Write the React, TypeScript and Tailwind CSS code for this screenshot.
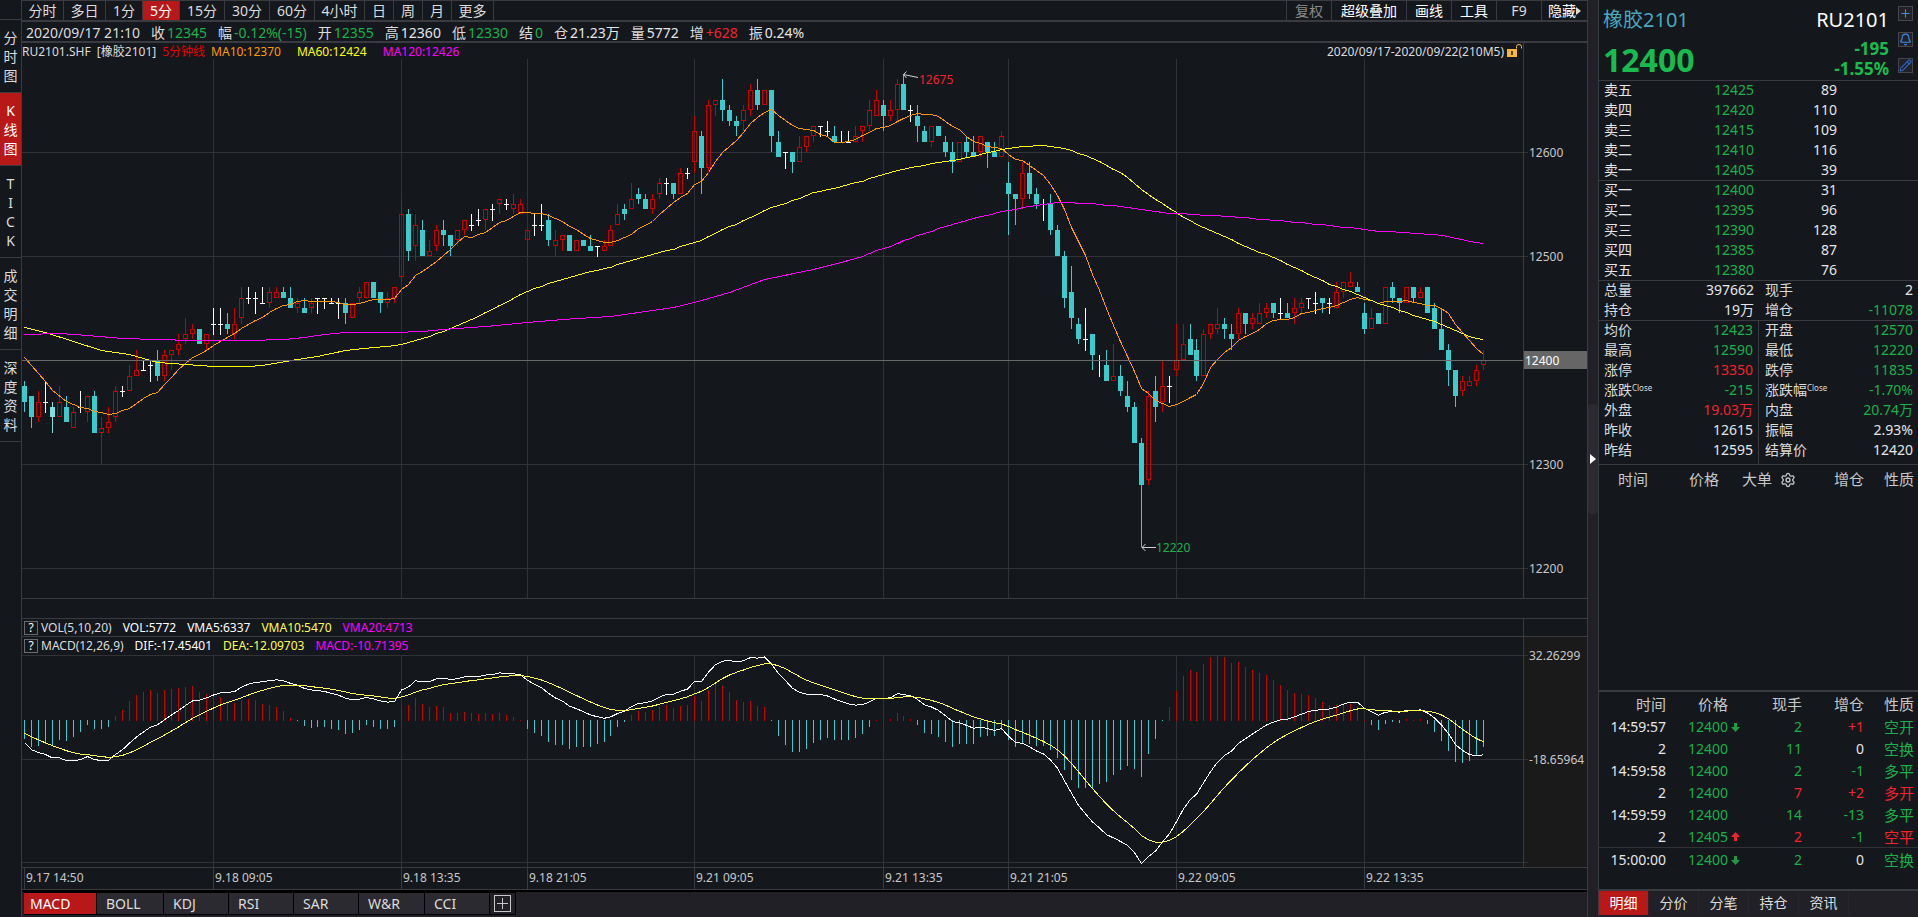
import React, { useState } from "react";
import { Bell, Pencil, Plus, Settings } from "lucide-react";

const UP = "#c80000";
const DOWN = "#3acccc";
const GRID = "#303236";

// open, high, low, close in ticks of 5 around 12400
const CANDLES: number[][] = [
  [-5, -4, -10, -8], [-7, -7, -13, -11], [-11, -6, -12, -8], [-8, -4, -10, -8], [-9, -8, -14, -11], [-11, -5, -11, -8],
  [-9, -7, -12, -12], [-13, -9, -13, -10], [-9, -6, -10, -9], [-10, -7, -12, -7], [-7, -6, -14, -14], [-14, -11, -20, -13],
  [-13, -9, -14, -12], [-11, -5, -12, -6], [-6, -5, -7, -6], [-6, -1, -6, -3], [-3, 2, -3, -2], [-2, 0, -2, -2],
  [-1, 0, -4, -1], [0, 2, -4, -3], [-3, 2, -4, 1], [1, 2, -2, 2], [2, 5, 1, 3], [4, 8, 3, 5],
  [5, 7, 4, 6], [6, 6, 3, 3], [3, 5, 2, 5], [7, 10, 5, 7], [7, 10, 5, 7], [7, 9, 5, 6],
  [5, 10, 4, 7], [8, 14, 7, 12], [12, 14, 11, 12], [12, 13, 9, 12], [11, 14, 11, 11], [11, 14, 10, 13],
  [12, 14, 12, 13], [13, 14, 12, 12], [12, 14, 10, 10], [10, 12, 9, 11], [10, 12, 9, 9], [10, 12, 9, 11],
  [12, 12, 9, 12], [12, 12, 10, 12], [11, 12, 11, 11], [11, 12, 8, 11], [11, 12, 7, 9], [8, 11, 8, 11],
  [12, 14, 11, 13], [12, 15, 12, 15], [15, 15, 12, 12], [13, 13, 9, 11], [11, 13, 10, 12], [12, 14, 11, 14],
  [16, 31, 15, 28], [28, 29, 19, 21], [22, 28, 19, 26], [25, 27, 20, 20], [20, 23, 20, 21], [22, 26, 21, 25],
  [25, 27, 22, 24], [24, 24, 20, 22], [23, 25, 22, 25], [25, 27, 24, 27], [26, 28, 25, 26], [27, 29, 26, 27],
  [27, 29, 25, 29], [29, 30, 27, 29], [30, 31, 28, 31], [30, 31, 29, 30], [29, 32, 28, 30], [28, 31, 28, 30],
  [23, 25, 20, 25], [26, 28, 24, 26], [26, 30, 25, 26], [27, 28, 22, 23], [22, 25, 20, 23], [23, 24, 21, 24],
  [24, 24, 21, 21], [21, 23, 21, 23], [23, 23, 22, 22], [22, 24, 21, 21], [22, 22, 20, 22], [21, 23, 21, 22],
  [22, 26, 22, 25], [26, 30, 26, 28], [29, 30, 27, 28], [29, 34, 29, 31], [32, 33, 30, 31], [31, 32, 29, 29],
  [29, 32, 28, 31], [32, 35, 31, 34], [34, 35, 32, 34], [34, 34, 31, 32], [32, 37, 32, 36], [36, 37, 35, 36],
  [38, 47, 36, 44], [43, 44, 32, 37], [37, 50, 36, 49], [49, 50, 47, 50], [50, 54, 46, 48], [48, 49, 45, 46],
  [46, 47, 43, 45], [46, 49, 44, 48], [48, 53, 47, 52], [52, 54, 48, 49], [49, 52, 49, 52], [52, 52, 40, 43],
  [42, 44, 39, 39], [40, 40, 37, 40], [40, 40, 36, 38], [38, 43, 38, 41], [41, 43, 40, 43], [43, 45, 42, 45],
  [45, 45, 43, 45], [44, 46, 43, 44], [43, 45, 42, 42], [42, 44, 42, 42], [42, 44, 42, 42], [42, 45, 42, 43],
  [44, 45, 42, 45], [45, 50, 44, 48], [47, 52, 47, 50], [49, 50, 44, 47], [47, 50, 46, 48], [48, 54, 46, 53],
  [53, 55, 48, 48], [48, 49, 46, 48], [47, 49, 42, 45], [44, 45, 42, 42], [42, 45, 41, 45], [45, 45, 43, 43],
  [42, 43, 39, 40], [40, 42, 36, 38], [38, 42, 38, 42], [42, 43, 39, 40], [40, 43, 39, 39], [40, 43, 39, 43],
  [42, 42, 37, 40], [40, 42, 39, 39], [39, 44, 39, 43], [34, 38, 24, 32], [32, 32, 26, 31], [31, 38, 29, 36],
  [36, 38, 31, 32], [32, 33, 29, 30], [30, 31, 27, 30], [30, 32, 24, 25], [25, 26, 20, 20], [20, 21, 10, 12],
  [13, 18, 6, 8], [7, 8, 3, 4], [4, 10, 2, 4], [5, 5, -2, 1], [0, 1, -3, 0], [-1, 2, -4, -4],
  [-4, 3, -4, -3], [-3, -1, -7, -6], [-7, -4, -10, -9], [-9, -8, -16, -16], [-16, -15, -36, -24], [-23, -6, -24, -7],
  [-6, -3, -12, -9], [-8, 0, -10, -5], [-5, -3, -8, -5], [-2, 7, -3, 0], [0, 7, 0, 3], [4, 7, 1, 1],
  [2, 4, -4, -3], [-3, 6, -3, 5], [5, 7, 4, 7], [6, 10, 5, 7], [7, 8, 4, 6], [5, 7, 2, 4],
  [5, 10, 4, 9], [9, 9, 5, 7], [7, 9, 6, 8], [7, 11, 7, 9], [9, 11, 8, 10], [11, 11, 8, 9],
  [9, 12, 8, 9], [9, 11, 8, 8], [9, 12, 7, 10], [10, 12, 9, 11], [12, 12, 10, 12], [11, 13, 9, 11],
  [12, 12, 9, 11], [11, 12, 9, 11], [10, 15, 10, 13], [13, 15, 12, 15], [14, 17, 14, 15], [14, 15, 13, 13],
  [9, 11, 5, 6], [6, 10, 6, 8], [9, 9, 7, 7], [7, 14, 7, 14], [14, 15, 11, 12], [12, 12, 9, 11],
  [11, 14, 11, 14], [14, 14, 11, 12], [12, 14, 12, 13], [14, 14, 9, 9], [10, 11, 6, 6], [6, 10, 2, 2],
  [2, 3, -5, -2], [-2, -2, -9, -7], [-6, -3, -7, -4], [-5, -3, -5, -4], [-4, -1, -5, -2], [-1, 2, -2, 0],
];

const CLOSES = CANDLES.map(c => c[3]);

// values before the first full window come from earlier sessions
const MA10_LEAD = [[0, 0.6], [3, -4], [4, -5.8], [6, -7.8], [8, -9]];
const MA60_LEAD = [
  [0, 6.3], [3, 5.3], [11, 2], [15, 1.2], [19, -0.4], [25, -1], [27, -1.15], [32, -1.15], [34, -0.9], [39, 0.1],
  [42, 0.7], [46, 1.9], [50, 2.5], [52, 2.6], [54, 3.1], [57, 4.2], [58, 4.7],
];
const MA120_LEAD = [
  [0, 5], [5, 5.2], [9, 4.9], [14, 4.2], [24, 3.9], [32, 3.9], [37, 4.1], [40, 4.4], [43, 5], [46, 5.3], [53, 5.3],
  [57, 5.6], [60, 6], [66, 6.6], [72, 7.4], [77, 7.8], [84, 8.5], [88, 9.3], [93, 10.2], [96, 11.1], [101, 13.1],
  [106, 15.6], [113, 17.5], [118, 19.3],
];

const SESSIONS = [
  { index: 0, label: "9.17 14:50" },
  { index: 27, label: "9.18 09:05" },
  { index: 54, label: "9.18 13:35" },
  { index: 72, label: "9.18 21:05" },
  { index: 96, label: "9.21 09:05" },
  { index: 123, label: "9.21 13:35" },
  { index: 141, label: "9.21 21:05" },
  { index: 165, label: "9.22 09:05" },
  { index: 192, label: "9.22 13:35" },
];

const AXIS_X = 1501;
const barX = (i: number) => 2 + 7 * i - Math.floor(i / 42);
const priceY = (tick: number) => Math.round(301 - tick * 5.2);
const macdY = (v: number) => (32.263 - v) / 0.4896;

const movingAverage = (size: number, lead: number[][]) => {
  const points = lead.map(([i, v]) => `${barX(i) + 0.5},${priceY(v) + 0.5}`);
  for (let i = size - 1; i < CLOSES.length; i++) {
    const sum = CLOSES.slice(i - size + 1, i + 1).reduce((a, b) => a + b, 0);
    points.push(`${barX(i) + 0.5},${priceY(sum / size) + 0.5}`);
  }
  return points.join(" ");
};

const macdSeries = () => {
  let fast = -1.35;
  let slow = 9;
  let dea = -5.9;
  return CLOSES.map((tick, i) => {
    if (i > 0) {
      fast += ((tick * 5 - fast) * 2) / 13;
      slow += ((tick * 5 - slow) * 2) / 27;
      dea += ((fast - slow - dea) * 2) / 10;
    }
    return { dif: fast - slow, dea, bar: 2 * (fast - slow - dea) };
  });
};

const Candle = ({ index, data }: { index: number; data: number[] }) => {
  const [o, h, l, c] = data;
  const x = barX(index);
  const top = priceY(Math.max(o, c));
  const bottom = priceY(Math.min(o, c));
  const high = priceY(h);
  const low = priceY(l);

  if (o === c) {
    return (
      <g fill="#ffffff">
        <rect x={x} y={high} width={1} height={low - high + 1} />
        <rect x={x - 2} y={top} width={5} height={1} />
      </g>
    );
  }
  if (c < o) {
    return (
      <g fill={index === 4 ? "#7fdede" : DOWN}>
        <rect x={x} y={high} width={1} height={low - high} />
        <rect x={x - 2} y={top} width={5} height={bottom - top} />
      </g>
    );
  }
  return (
    <g fill={UP}>
      <rect x={x} y={high} width={1} height={top - high} />
      <rect x={x} y={bottom} width={1} height={low - bottom} />
      <path
        fillRule="evenodd"
        d={`M${x - 2} ${top}h5v${bottom - top}h-5zM${x - 1} ${top + 1}h3v${bottom - top - 2}h-3z`}
      />
    </g>
  );
};

const PriceChart = () => (
  <svg className="block h-full w-full" viewBox="0 0 1565 539" preserveAspectRatio="none" shapeRendering="crispEdges">
    <g fill={GRID}>
      {SESSIONS.slice(1).map(s => (
        <rect key={s.index} x={barX(s.index)} y={0} width={1} height={539} />
      ))}
      {[40, 20, -20, -40].map(tick => (
        <rect key={tick} x={0} y={priceY(tick)} width={AXIS_X + 5} height={1} />
      ))}
      <rect x={AXIS_X} y={0} width={1} height={539} fill="#3a3b40" />
    </g>
    {CANDLES.map((data, i) => (
      <Candle key={i} index={i} data={data} />
    ))}
    <g fill="none" strokeWidth={1}>
      <polyline stroke="#ff9900" points={movingAverage(10, MA10_LEAD)} />
      <polyline stroke="#ffff00" points={movingAverage(60, MA60_LEAD)} />
      <polyline stroke="#ff00ff" points={movingAverage(120, MA120_LEAD)} />
    </g>
    <rect x={0} y={301} width={AXIS_X} height={1} fill="#6a6a6a" />
    <g fill="none" stroke="#d0d0d0" shapeRendering="auto">
      <path d="M896 18.5L881.5 15.5M884.5 12.5L881.5 15.5L884.5 19" />
      <path d="M1134 488.5H1120M1123.5 485L1120 488.5L1123.5 492" />
    </g>
    <g className="text-xs">
      <text x={897} y={25} fill="#f5222d">12675</text>
      <text x={1134} y={493} fill="#18b14b">12220</text>
      <g fill="#c8c8c8">
        <text x={1507} y={98}>12600</text>
        <text x={1507} y={202}>12500</text>
        <text x={1507} y={410}>12300</text>
        <text x={1507} y={514}>12200</text>
      </g>
      <rect x={AXIS_X + 1} y={292} width={63} height={18} fill="#666666" />
      <text x={1503} y={306} fill="#ffffff">12400</text>
    </g>
  </svg>
);

const MacdChart = () => {
  const series = macdSeries();
  const zero = Math.round(macdY(0));
  return (
    <svg
      className="block h-[212px] w-full shrink-0 overflow-visible"
      viewBox="0 0 1565 212"
      preserveAspectRatio="none"
      shapeRendering="crispEdges"
    >
      <rect x={AXIS_X + 1} y={0} width={63} height={212} fill="#1a1a1b" />
      <g fill={GRID}>
        {SESSIONS.slice(1).map(s => (
          <rect key={s.index} x={barX(s.index)} y={0} width={1} height={212} />
        ))}
        {[0, 104, 207].map(y => (
          <rect key={y} x={0} y={y} width={AXIS_X + 5} height={1} />
        ))}
        <rect x={AXIS_X} y={0} width={1} height={212} fill="#3a3b40" />
      </g>
      {series.map((s, i) => {
        const y = Math.round(macdY(s.bar));
        return s.bar > 0 ? (
          <rect key={i} x={barX(i)} y={y} width={1} height={Math.max(zero - y, 1)} fill={UP} />
        ) : (
          <rect key={i} x={barX(i)} y={zero - 1} width={1} height={Math.max(y - zero + 1, 1)} fill={DOWN} />
        );
      })}
      <g fill="none" strokeWidth={1}>
        <polyline stroke="#ffffff" points={series.map((s, i) => `${barX(i) + 0.5},${macdY(s.dif) + 0.5}`).join(" ")} />
        <polyline stroke="#ffff50" points={series.map((s, i) => `${barX(i) + 0.5},${macdY(s.dea) + 0.5}`).join(" ")} />
      </g>
      <g className="text-xs" fill="#c8c8c8">
        <text x={1507} y={5}>32.26299</text>
        <text x={1507} y={109}>-18.65964</text>
      </g>
    </svg>
  );
};

const TimeAxis = () => (
  <svg className="block h-[21px] w-full" viewBox="0 0 1565 21" preserveAspectRatio="none" shapeRendering="crispEdges">
    {SESSIONS.map(s => (
      <g key={s.index}>
        <rect x={barX(s.index)} y={0} width={1} height={21} fill="#3a3b40" />
        <text x={barX(s.index) + 2} y={14} className="text-xs" fill="#c8c8c8">
          {s.label}
        </text>
      </g>
    ))}
  </svg>
);

const PERIODS = [
  { label: "分时", width: "w-[42px]" },
  { label: "多日", width: "w-[42px]" },
  { label: "1分", width: "w-[37px]" },
  { label: "5分", width: "w-[37px]" },
  { label: "15分", width: "w-[45px]" },
  { label: "30分", width: "w-[45px]" },
  { label: "60分", width: "w-[45px]" },
  { label: "4小时", width: "w-[50px]" },
  { label: "日", width: "w-[29px]" },
  { label: "周", width: "w-[29px]" },
  { label: "月", width: "w-[29px]" },
  { label: "更多", width: "w-[42px]" },
];

const Toolbar = () => {
  const [period, setPeriod] = useState("5分");
  const tool = "flex items-center justify-center border-l border-[#3a3b40] whitespace-nowrap";
  return (
    <div className="flex h-[22px] shrink-0 border-t border-b-2 border-[#3a3b40] text-sm leading-none">
      {PERIODS.map(p => (
        <button
          key={p.label}
          onClick={() => setPeriod(p.label)}
          className={`${p.width} border-r border-[#3a3b40] whitespace-nowrap ${
            period === p.label ? "bg-[#b81818] text-white" : "text-[#dcdcdc]"
          }`}
        >
          {p.label}
        </button>
      ))}
      <div className="flex-1" />
      <button className={`${tool} w-[45px] text-[#8a8a8a]`}>复权</button>
      <button className={`${tool} w-[75px] text-white`}>超级叠加</button>
      <button className={`${tool} w-[45px] text-white`}>画线</button>
      <button className={`${tool} w-[45px] text-white`}>工具</button>
      <button className={`${tool} w-[45px] text-[#dcdcdc]`}>F9</button>
      <button className={`${tool} w-[46px] text-white`}>
        隐藏
        <svg width="5" height="8" viewBox="0 0 5 8" fill="#dcdcdc">
          <path d="M0 0L5 4L0 8z" />
        </svg>
      </button>
    </div>
  );
};

const QUOTE = [
  { label: "收", value: "12345", color: "text-[#18b14b]" },
  { label: "幅", value: "-0.12%(-15)", color: "text-[#18b14b]" },
  { label: "开", value: "12355", color: "text-[#18b14b]" },
  { label: "高", value: "12360", color: "text-[#e6e6e6]" },
  { label: "低", value: "12330", color: "text-[#18b14b]" },
  { label: "结", value: "0", color: "text-[#18b14b]" },
  { label: "仓", value: "21.23万", color: "text-[#e6e6e6]" },
  { label: "量", value: "5772", color: "text-[#e6e6e6]" },
  { label: "增", value: "+628", color: "text-[#f5222d]" },
  { label: "振", value: "0.24%", color: "text-[#e6e6e6]" },
];

const QuoteBar = () => (
  <div className="flex h-[21px] shrink-0 items-center gap-[11px] border-b-2 border-[#3a3b40] pt-[2px] pl-1 text-sm leading-none whitespace-nowrap text-[#dcdcdc]">
    <span>2020/09/17 21:10</span>
    {QUOTE.map(q => (
      <span key={q.label} className="flex gap-[2px]">
        {q.label}
        <span className={q.color}>{q.value}</span>
      </span>
    ))}
  </div>
);

const SIDE_ITEMS = ["分时图", "K线图", "TICK", "成交明细", "深度资料"];

const SideNav = () => {
  const [active, setActive] = useState("K线图");
  return (
    <nav className="flex w-[22px] shrink-0 flex-col border-r border-[#3a3b40]">
      <div className="h-5 border-b border-[#3a3b40]" />
      {SIDE_ITEMS.map(item => (
        <button
          key={item}
          onClick={() => setActive(item)}
          className={`flex flex-col items-center border-b border-[#3a3b40] pt-2 pb-[7px] text-sm leading-[19px] ${
            active === item ? "bg-[#b81818] text-white" : "text-[#dcdcdc]"
          }`}
        >
          {item.split("").map((ch, i) => (
            <span key={i}>{ch}</span>
          ))}
        </button>
      ))}
    </nav>
  );
};

const INDICATORS = [
  { label: "MACD", width: "w-[73px]" },
  { label: "BOLL", width: "w-[67px]" },
  { label: "KDJ", width: "w-[65px]" },
  { label: "RSI", width: "w-[65px]" },
  { label: "SAR", width: "w-[65px]" },
  { label: "W&R", width: "w-[66px]" },
  { label: "CCI", width: "w-[65px]" },
];

const IndicatorTabs = () => {
  const [active, setActive] = useState("MACD");
  return (
    <div className="flex h-[27px] shrink-0 border-t-2 border-black bg-[#202026] pb-[2px] pl-[2px] text-sm leading-none">
      {INDICATORS.map(t => (
        <button
          key={t.label}
          onClick={() => setActive(t.label)}
          className={`${t.width} border border-l-0 border-black text-left ${
            active === t.label ? "bg-[#b81818] pl-[6px] text-white" : "bg-[#2a2a30] pl-[9px] text-[#dcdcdc]"
          }`}
        >
          {t.label}
        </button>
      ))}
      <button aria-label="添加指标" className="flex w-[26px] items-center justify-center border border-l-0 border-black">
        <svg width="17" height="17" viewBox="0 0 17 17" fill="none" stroke="#c8c8c8" shapeRendering="crispEdges">
          <path d="M0.5 0.5h16v16h-16zM3 8.5h11M8.5 3v11" />
        </svg>
      </button>
    </div>
  );
};

const HelpButton = () => (
  <button className="mr-[3px] flex h-[14px] w-[14px] items-center justify-center border border-[#6a6a6a] text-xs leading-none text-white">
    ?
  </button>
);

const UnlockIcon = () => (
  <svg width="16" height="16" viewBox="0 0 16 16" className="ml-[3px]" fill="none">
    <path d="M0 6h10v8h-10z" fill="#f5b83c" />
    <path d="M4 8h2v4h-2z" fill="#5a4010" />
    <path d="M9.5 5.5V3.5Q9.5 1.5 12 1.5T14.5 3.5V5.5" stroke="#f5b83c" />
  </svg>
);

const BOOK = [
  ["卖五", "12425", "89"],
  ["卖四", "12420", "110"],
  ["卖三", "12415", "109"],
  ["卖二", "12410", "116"],
  ["卖一", "12405", "39"],
  ["买一", "12400", "31"],
  ["买二", "12395", "96"],
  ["买三", "12390", "128"],
  ["买四", "12385", "87"],
  ["买五", "12380", "76"],
];

const OrderBook = () => (
  <table className="w-full table-fixed border-separate border-spacing-0 text-sm leading-[18px]">
    <colgroup>
      <col className="w-[60px]" />
      <col className="w-[95px]" />
      <col className="w-[83px]" />
      <col />
    </colgroup>
    <tbody className="align-top">
      {BOOK.map(([label, price, qty], i) => {
        const line = i % 5 === 4 ? "border-b border-[#3a3b40]" : "";
        return (
          <tr key={label} className="text-right text-[#e6e6e6]">
            <th className={`h-5 p-0 pl-[5px] text-left font-normal ${line}`}>{label}</th>
            <td className={`h-5 p-0 text-[#18b14b] ${line}`}>{price}</td>
            <td className={`h-5 p-0 ${line}`}>{qty}</td>
            <td className={`h-5 p-0 ${line}`} />
          </tr>
        );
      })}
    </tbody>
  </table>
);

const G = "text-[#18b14b]";
const R = "text-[#f5222d]";
const W = "text-[#e6e6e6]";

const STATS = [
  ["总量", "397662", W, "现手", "2", W],
  ["持仓", "19万", W, "增仓", "-11078", G],
  ["均价", "12423", G, "开盘", "12570", G],
  ["最高", "12590", G, "最低", "12220", G],
  ["涨停", "13350", R, "跌停", "11835", G],
  ["涨跌", "-215", G, "涨跌幅", "-1.70%", G],
  ["外盘", "19.03万", R, "内盘", "20.74万", G],
  ["昨收", "12615", W, "振幅", "2.93%", W],
  ["昨结", "12595", W, "结算价", "12420", W],
];

const StatLabel = ({ text }: { text: string }) => (
  <>
    {text}
    {text.startsWith("涨跌") && <span className="inline-block align-top text-[8px] leading-[14px]">Close</span>}
  </>
);

const StatsTable = () => (
  <table className="w-full table-fixed border-separate border-spacing-0 text-sm leading-[18px] whitespace-nowrap">
    <colgroup>
      <col className="w-[80px]" />
      <col className="w-[80px]" />
      <col className="w-[80px]" />
      <col />
    </colgroup>
    <tbody className="align-top">
      {STATS.map(([l1, v1, c1, l2, v2, c2], i) => {
        const line = i === 1 ? "border-b border-[#3a3b40]" : "";
        const last = i === STATS.length - 1 ? "h-[23px]" : "h-5";
        return (
          <tr key={l1}>
            <th className={`${last} p-0 pl-[5px] text-left font-normal text-[#dcdcdc] ${line}`}>
              <StatLabel text={l1} />
            </th>
            <td className={`p-0 pr-[5px] text-right ${c1} ${line} ${i > 1 ? "border-r border-[#3a3b40]" : ""}`}>{v1}</td>
            <th className={`p-0 pl-[6px] text-left font-normal text-[#dcdcdc] ${line}`}>
              <StatLabel text={l2} />
            </th>
            <td className={`p-0 pr-[5px] text-right ${c2} ${line}`}>{v2}</td>
          </tr>
        );
      })}
    </tbody>
  </table>
);

const TRADES = [
  { time: "14:59:57", price: "12400", dir: "down", qty: "2", qc: G, oi: "+1", oc: R, type: "空开", tc: G },
  { time: "2", price: "12400", dir: "", qty: "11", qc: G, oi: "0", oc: W, type: "空换", tc: G },
  { time: "14:59:58", price: "12400", dir: "", qty: "2", qc: G, oi: "-1", oc: G, type: "多平", tc: G },
  { time: "2", price: "12400", dir: "", qty: "7", qc: R, oi: "+2", oc: R, type: "多开", tc: R },
  { time: "14:59:59", price: "12400", dir: "", qty: "14", qc: G, oi: "-13", oc: G, type: "多平", tc: G },
  { time: "2", price: "12405", dir: "up", qty: "2", qc: R, oi: "-1", oc: G, type: "空平", tc: R },
  { time: "15:00:00", price: "12400", dir: "down", qty: "2", qc: G, oi: "0", oc: W, type: "空换", tc: G },
];

const DirArrow = ({ dir }: { dir: string }) => {
  if (!dir) return null;
  return (
    <svg width="9" height="9" viewBox="0 0 9 9" className="ml-[3px] shrink-0" fill={dir === "up" ? "#f5222d" : "#1f9a45"}>
      {dir === "up" ? <path d="M4.5 0L9 5H6V9H3V5H0z" /> : <path d="M4.5 9L0 4H3V0H6V4H9z" />}
    </svg>
  );
};

const TradeTable = () => (
  <table className="w-full table-fixed border-separate border-spacing-0 text-right text-sm leading-5">
    <colgroup>
      <col className="w-[67px]" />
      <col className="w-[76px]" />
      <col className="w-[60px]" />
      <col className="w-[62px]" />
      <col />
    </colgroup>
    <thead>
      <tr className="text-[15px] text-[#c8c8c8]">
        <th className="h-6 p-0 font-normal">时间</th>
        <th className="h-6 p-0 pr-[14px] font-normal">价格</th>
        <th className="h-6 p-0 font-normal">现手</th>
        <th className="h-6 p-0 font-normal">增仓</th>
        <th className="h-6 p-0 pr-1 font-normal">性质</th>
      </tr>
    </thead>
    <tbody>
      {TRADES.map((t, i) => {
        const cell = i === 5 ? "h-[22px] p-0 border-b border-[#303236]" : i === 6 ? "h-6 p-0" : "h-[22px] p-0";
        return (
          <tr key={i}>
            <td className={`${cell} ${W}`}>{t.time}</td>
            <td className={`${cell} ${G}`}>
              <span className="flex items-center pl-[22px]">
                {t.price}
                <DirArrow dir={t.dir} />
              </span>
            </td>
            <td className={`${cell} ${t.qc}`}>{t.qty}</td>
            <td className={`${cell} ${t.oc}`}>{t.oi}</td>
            <td className={`${cell} text-[15px] ${t.tc}`}>
              <span className="mr-1">{t.type}</span>
            </td>
          </tr>
        );
      })}
    </tbody>
  </table>
);

const DETAIL_TABS = ["明细", "分价", "分笔", "持仓", "资讯"];

const QuotePanel = () => {
  const [tab, setTab] = useState("明细");
  const iconButton = "flex h-[15px] w-[15px] items-center justify-center border border-[#46474c] bg-[#222226]";
  return (
    <aside className="flex w-80 shrink-0 flex-col border-l border-[#3a3b40]">
      <header className="flex h-[81px] shrink-0 border-b border-[#3a3b40] pt-[6px] pr-[5px] pl-1">
        <div className="flex flex-1 flex-col">
          <h1 className="text-xl leading-7 text-[#4aa8c0]">橡胶2101</h1>
          <strong className="text-[32px] leading-[52px] text-[#18bc4e]">12400</strong>
        </div>
        <div className="flex flex-col text-right text-[17px] leading-5 font-bold text-[#18bc4e]">
          <span className="mb-[5px] text-xl leading-7 font-normal text-white">RU2101</span>
          <span>-195</span>
          <span>-1.55%</span>
        </div>
        <div className="ml-[9px] flex flex-col gap-[11px]">
          <button aria-label="添加自选" className={iconButton}>
            <Plus size={13} strokeWidth={2} color="#3c8cf0" className="shrink-0" />
          </button>
          <button aria-label="预警" className={iconButton}>
            <Bell size={13} strokeWidth={2} color="#3c8cf0" className="shrink-0" />
          </button>
          <button aria-label="备注" className={iconButton}>
            <Pencil size={13} strokeWidth={2} color="#3068d0" className="shrink-0" />
          </button>
        </div>
      </header>
      <OrderBook />
      <StatsTable />
      <div className="flex h-[30px] shrink-0 items-center border-t border-[#3a3b40] pr-1 text-right text-[15px] leading-none text-[#c8c8c8]">
        <span className="w-[49px]">时间</span>
        <span className="w-[71px]">价格</span>
        <span className="w-[53px]">大单</span>
        <button aria-label="大单设置" className="ml-2">
          <Settings size={16} strokeWidth={2} />
        </button>
        <span className="flex-1 pr-5">增仓</span>
        <span>性质</span>
      </div>
      <div className="flex-1" />
      <div className="h-[199px] shrink-0 border-t-2 border-[#3a3b40]">
        <TradeTable />
      </div>
      <div className="flex h-7 shrink-0 border-t-2 border-[#3a3b40] bg-[#202026] pb-[2px] text-sm leading-none">
        {DETAIL_TABS.map(t => (
          <button
            key={t}
            onClick={() => setTab(t)}
            className={`w-[50px] border-r border-[#26262a] ${tab === t ? "bg-[#b81818] text-white" : "text-[#dcdcdc]"}`}
          >
            {t}
          </button>
        ))}
      </div>
    </aside>
  );
};

export default function App() {
  return (
    <div className="flex h-screen overflow-hidden bg-[#14171c] font-['Noto_Sans','Noto_Sans_CJK_SC',sans-serif] text-[#dcdcdc]">
      <SideNav />
      <main className="flex min-w-0 flex-1 flex-col border-r border-[#3a3b40]">
        <Toolbar />
        <QuoteBar />
        <div className="flex h-4 shrink-0 text-xs leading-[18px] whitespace-nowrap">
          <span>RU2101.SHF&nbsp; [橡胶2101]</span>
          <span className="ml-[6px] text-[#e60000]">5分钟线</span>
          <span className="ml-[6px] text-[#ff9900]">MA10:12370</span>
          <span className="ml-4 text-[#ffff00]">MA60:12424</span>
          <span className="ml-4 text-[#ff00ff]">MA120:12426</span>
          <span className="ml-auto">2020/09/17-2020/09/22(210M5)</span>
          <UnlockIcon />
          <span className="w-16 border-l border-[#3a3b40]" />
        </div>
        <div className="min-h-0 flex-1">
          <PriceChart />
        </div>
        <div className="h-5 shrink-0 border-t border-[#3a3b40]" />
        <div className="flex h-[18px] shrink-0 items-center border-t border-[#3a3b40] pl-[2px] text-xs leading-none whitespace-nowrap">
          <HelpButton />
          <span>VOL(5,10,20)</span>
          <span className="ml-[11px] text-white">VOL:5772</span>
          <span className="ml-[11px] text-white">VMA5:6337</span>
          <span className="ml-[11px] text-[#ffff50]">VMA10:5470</span>
          <span className="ml-[11px] text-[#ff00ff]">VMA20:4713</span>
          <span className="ml-auto h-full w-16 border-l border-[#3a3b40]" />
        </div>
        <div className="flex h-[19px] shrink-0 items-center border-t border-[#3a3b40] pl-[2px] text-xs leading-none whitespace-nowrap">
          <HelpButton />
          <span>MACD(12,26,9)</span>
          <span className="ml-[11px] text-white">DIF:-17.45401</span>
          <span className="ml-[11px] text-[#ffff50]">DEA:-12.09703</span>
          <span className="ml-[11px] text-[#ff00ff]">MACD:-10.71395</span>
          <span className="ml-auto h-full w-16 border-l border-[#3a3b40] bg-[#1a1a1b]" />
        </div>
        <MacdChart />
        <div className="shrink-0 border-y border-[#3a3b40]">
          <TimeAxis />
        </div>
        <IndicatorTabs />
      </main>
      <div className="flex w-[10px] shrink-0 items-center bg-[#202026]">
        <button aria-label="收起侧栏" className="flex h-[110px] w-full items-center justify-center rounded-sm bg-[#2a2a30]">
          <svg width="6" height="10" viewBox="0 0 6 10" fill="#ffffff">
            <path d="M0 0L6 5L0 10z" />
          </svg>
        </button>
      </div>
      <QuotePanel />
    </div>
  );
}
